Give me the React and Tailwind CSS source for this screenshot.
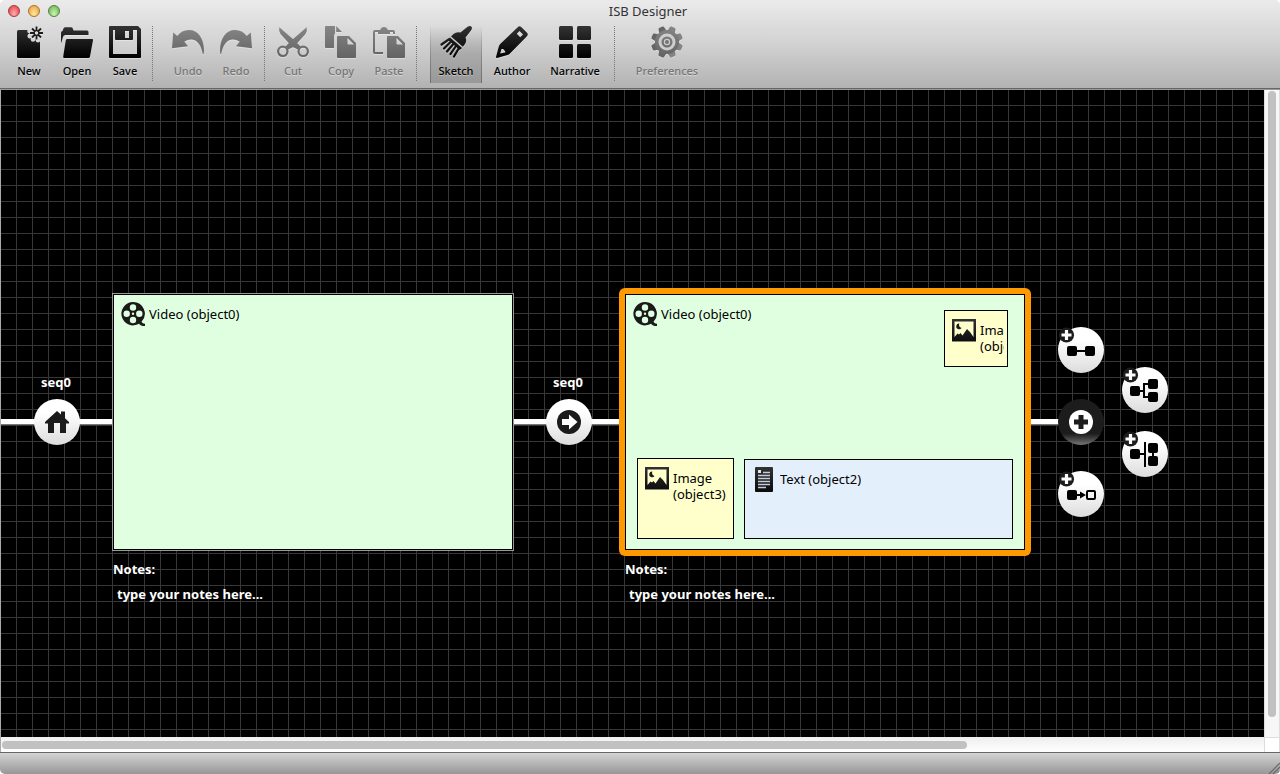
import React from "react";

/* Shared gradients used by every drawing in the window. */
function Gradients() {
  return (
    <svg className="absolute size-0" aria-hidden="true">
      <defs>
        <linearGradient id="ink" gradientUnits="userSpaceOnUse" x1="0" y1="0" x2="0" y2="32">
          <stop offset="0" stopColor="#333" />
          <stop offset="1" stopColor="#000" />
        </linearGradient>
        <linearGradient id="faded" gradientUnits="userSpaceOnUse" x1="0" y1="0" x2="0" y2="32">
          <stop offset="0" stopColor="#868686" />
          <stop offset="1" stopColor="#636363" />
        </linearGradient>
        <mask id="burst-cut">
          <rect width="32" height="32" fill="#fff" />
          <circle cx="23.5" cy="7" r="7" fill="#000" />
          <circle cx="16.5" cy="5" r="2.3" fill="#000" />
          <circle cx="17" cy="10" r="2.5" fill="#000" />
          <circle cx="20" cy="13.500" r="2.3" fill="#000" />
          <circle cx="25" cy="14.300" r="2.300" fill="#000" />
        </mask>
      </defs>
    </svg>
  );
}

const gearTeeth =
  "M13 1Q13.200 0 14.200 0H17.800Q18.800 0 19 1L20 6H12ZM13 31Q13.200 32 14.200 32H17.800Q18.800 32 19 31L20 26H12Z";

const toolIcons = {
  new: (
    <>
      <rect x="4" y="4" width="23" height="28" rx="1.5" mask="url(#burst-cut)" />
      <path
        d="M23.500 .500V5M23.500 9V13.500M17 7H21.500M25.500 7H30M19 2.500L22 5.500M25 8.500L28 11.500M28 2.500L25 5.500M22 8.500L19 11.500"
        stroke="#1c1c1c"
        strokeWidth="1.800"
      />
      <circle cx="23.5" cy="7" r="2.300" fill="none" stroke="#1c1c1c" strokeWidth="1.200" />
    </>
  ),
  open: (
    <>
      <path d="M0 17.5V6.5Q0 5 1.5 5L2.5 2.5Q3 1.2 4.5 1.2H10Q11.3 1.2 11.8 2.5L12.5 4.5H26Q27.5 4.5 27.5 6V9H4.5Q2.7 9 2.2 10.5Z" />
      <path d="M6.3 13H31Q32.3 13 32 14.3L29 30.5Q28.8 32 27.2 32H3.3Q2 32 2.2 30.5L4.8 14.3Q5 13 6.3 13Z" />
    </>
  ),
  save: (
    <path
      fillRule="evenodd"
      d="M1 0H29L32 3V31Q32 32 31 32H1Q0 32 0 31V1Q0 0 1 0ZM4 4V28H28V4H24V13Q24 14 23 14H7Q6 14 6 13V4ZM16 5V12H20V5Z"
    />
  ),
  undo: (
    <path d="M1.2 6.5L5.3 10C8 6 12 4 17 4C26 4 32 12 32 25L31.5 28L30.8 28C29.5 20 25.5 14 20 13.5C16.5 13.3 13.7 14.5 12.3 15.8L16 20.2L0 22.3Z" />
  ),
  redo: (
    <path d="M30.8 6.5L26.7 10C24 6 20 4 15 4C6 4 0 12 0 25L.5 28L1.2 28C2.5 20 6.5 14 12 13.5C15.500 13.3 18.3 14.5 19.7 15.8L16 20.2L32 22.3Z" />
  ),
  cut: (
    <>
      <path d="M2.300 1.200L17 14L23.500 20.500L21 23.500C17 22 15 20.500 13 18.500L3.500 8Q1.500 4.500 2.300 1.200Z" />
      <path d="M29.700 1.200L15 14L8.500 20.500L11 23.500C15 22 17 20.500 19 18.500L28.500 8Q30.500 4.500 29.700 1.200Z" />
      <g fill="none" stroke="url(#faded)" strokeWidth="2.200">
        <circle cx="5.800" cy="25.300" r="4.700" />
        <circle cx="26.200" cy="25.300" r="4.700" />
      </g>
    </>
  ),
  copy: (
    <>
      <path d="M1 0H10V7.500Q9 8.500 9 10V22H1Q0 22 0 21V1Q0 0 1 0ZM11.200 0L17 6H11.200Z" />
      <path fillRule="evenodd" d="M13 10H24L31 17V31Q31 32 30 32H13Q12 32 12 31V11Q12 10 13 10ZM22.500 12V17.500Q22.500 18.500 23.500 18.500H29Z" />
    </>
  ),
  paste: (
    <>
      <path d="M10 27H2Q1 27 1 26V6Q1 5 2 5H20Q21 5 21 6V8" fill="none" stroke="url(#faded)" strokeWidth="2" />
      <path d="M5 8V6Q5 4 7.500 3.500Q8 1 11 1Q14 1 14.500 3.500Q17 4 17 6V8Z" />
      <path fillRule="evenodd" d="M15 10H25L32 17V31Q32 32 31 32H15Q14 32 14 31V11Q14 10 15 10ZM23.500 12V17.500Q23.500 18.500 24.500 18.500H30Z" />
    </>
  ),
  sketch: (
    <>
      <path d="M28 .500Q30.500 -.800 31.700 1Q32.400 2.500 31 4.500L25.500 11.500Q27 14.500 25 18L22.800 20.800L11 10.500L13.500 8Q16.500 5.500 20.500 6.500L26 2Z" />
      <path d="M10 11.500L22 22L19.800 24L7.500 13.500Z" />
      <path
        d="M8.700 13.500L1.500 18.500M11 15.500L4 22.500M13.500 17.700L7 25.500M16 20L10.500 28M18.800 22.300L14 30.500"
        fill="none"
        stroke="url(#ink)"
        strokeWidth="2.200"
        strokeLinecap="round"
      />
    </>
  ),
  author: (
    <path
      fillRule="evenodd"
      d="M22 1Q23.500 -.500 25.200 1L31 6.800Q32.500 8.500 31 10.200L14 27.500Q13 28.500 11.500 29L1 32Q0 32.200 0 31L2.800 20.500Q3.200 19 4.200 18ZM23.500 5L20.800 7.800L24.200 11.200L27 8.400ZM5.500 23L4.200 27.600L9.300 26.500Q9.500 24.800 8 24Q7.600 22.500 5.500 23Z"
    />
  ),
  narrative: (
    <>
      <rect width="14" height="14" rx="1.500" />
      <rect x="18" width="14" height="14" rx="1.500" />
      <rect y="18" width="14" height="14" rx="1.500" />
      <rect x="18" y="18" width="14" height="14" rx="1.500" />
    </>
  ),
  preferences: (
    <>
      <path d={gearTeeth} transform="rotate(22.5 16 16)" />
      <path d={gearTeeth} transform="rotate(67.5 16 16)" />
      <path d={gearTeeth} transform="rotate(112.5 16 16)" />
      <path d={gearTeeth} transform="rotate(157.5 16 16)" />
      <circle cx="16" cy="16" r="12" />
      <circle cx="16" cy="16" r="8.500" fill="#cdcdcd" />
      <circle cx="16" cy="16" r="5.500" />
      <circle cx="16" cy="16" r="2.600" fill="none" stroke="#cdcdcd" strokeWidth="1.200" />
    </>
  ),
};

function Tool({ icon, label, width = "w-12", active = false, disabled = false }) {
  return (
    <button
      type="button"
      disabled={disabled}
      aria-pressed={active}
      className={`flex h-[57px] shrink-0 flex-col items-center ${width} ${
        active
          ? "bg-[linear-gradient(to_bottom,transparent,#707070),linear-gradient(to_bottom,transparent,#707070),linear-gradient(to_bottom,transparent,#aaaaaa_50%,#989898)] bg-size-[1px_100%,1px_100%,100%_100%] bg-position-[left_top,right_top,left_top] bg-no-repeat"
          : ""
      }`}
    >
      <svg
        viewBox="0 0 32 32"
        className="size-8 shrink-0 overflow-visible drop-shadow-[0_1px_0_rgba(255,255,255,0.35)]"
        fill={disabled ? "url(#faded)" : "url(#ink)"}
        aria-hidden="true"
      >
        {toolIcons[icon]}
      </svg>
      <span
        className={`mt-[5px] text-[11px] leading-4 font-medium whitespace-nowrap [text-shadow:0_1px_0_rgba(255,255,255,0.4)] ${
          disabled ? "text-[#757575]" : "text-black"
        }`}
      >
        {label}
      </span>
    </button>
  );
}

function Separator() {
  return <div className="h-[55px] w-px shrink-0 border-l border-dotted border-[#777]" />;
}

function TitleBar() {
  return (
    <header className="shrink-0 border-b border-[#666] bg-linear-to-b from-[#ebebeb] via-[#d2d2d2] to-[#b2b2b2]">
      <div className="relative flex h-[26px] items-start justify-center pt-[3px]">
        <div className="absolute top-[5px] left-2 flex gap-2">
          <button type="button" aria-label="Close" className="size-3 rounded-full border border-[#a33c3c] bg-radial-[at_50%_80%] from-[#ffb0b0] to-[#e0363c]" />
          <button type="button" aria-label="Minimize" className="size-3 rounded-full border border-[#a9702c] bg-radial-[at_50%_80%] from-[#ffe9a0] to-[#e99a34]" />
          <button type="button" aria-label="Zoom" className="size-3 rounded-full border border-[#4f8040] bg-radial-[at_50%_80%] from-[#cdf5b0] to-[#62ad4c]" />
        </div>
        <h1 className="pl-4 text-[13px] leading-4 text-[#333]">ISB Designer</h1>
      </div>
      <div className="flex h-[62px] items-start pl-[5px]" role="toolbar" aria-label="Main">
        <Tool icon="new" label="New" />
        <Tool icon="open" label="Open" />
        <Tool icon="save" label="Save" />
        <div className="flex pr-[11px] pl-[3px]"><Separator /></div>
        <Tool icon="undo" label="Undo" disabled />
        <Tool icon="redo" label="Redo" disabled />
        <div className="flex px-1"><Separator /></div>
        <Tool icon="cut" label="Cut" disabled />
        <Tool icon="copy" label="Copy" disabled />
        <Tool icon="paste" label="Paste" disabled />
        <div className="flex pr-[13px] pl-[3px]"><Separator /></div>
        <Tool icon="sketch" label="Sketch" width="w-[52px]" active />
        <Tool icon="author" label="Author" width="w-[60px]" />
        <Tool icon="narrative" label="Narrative" width="w-[66px]" />
        <div className="flex pr-5 pl-[6px]"><Separator /></div>
        <Tool icon="preferences" label="Preferences" width="w-[64px]" disabled />
      </div>
    </header>
  );
}

function FilmIcon() {
  return (
    <svg viewBox="0 0 24 24" className="size-6 shrink-0" aria-hidden="true">
      <path
        fill="#1a1a1a"
        fillRule="evenodd"
        d="M12 0A11.700 11.700 0 0 1 20.500 19.800Q21.500 21.800 24 21.700V24Q20 24.500 18 21.800A11.700 11.700 0 1 1 12 0ZM12 2.300A3.200 3.200 0 1 0 12 8.700A3.200 3.200 0 1 0 12 2.300ZM12 14.800A3.200 3.200 0 1 0 12 21.200A3.200 3.200 0 1 0 12 14.800ZM5.700 8.500A3.200 3.200 0 1 0 5.700 14.900A3.200 3.200 0 1 0 5.700 8.500ZM18.300 8.500A3.200 3.200 0 1 0 18.300 14.900A3.200 3.200 0 1 0 18.300 8.500ZM12 10.600A1.200 1.200 0 1 0 12 13A1.200 1.200 0 1 0 12 10.600Z"
      />
    </svg>
  );
}

function PictureIcon() {
  return (
    <svg viewBox="0 0 24 24" className="size-6 shrink-0" aria-hidden="true">
      <path fill="url(#ink)" fillRule="evenodd" d="M0 1H24V23H0ZM2.500 3.500V19L5.500 15.500L7 16.500L8.500 15L10.500 17.500L15 11L18 14L21.500 19V3.500Z" />
      <path fill="#1a1a1a" d="M7.300 5.500A2.900 2.900 0 1 0 9.500 10A3.600 3.600 0 0 1 7.300 5.500Z" />
      <path fill="#8a8a70" d="M0 23H24V24H0Z" />
    </svg>
  );
}

function DocumentIcon() {
  return (
    <svg viewBox="0 0 18 25" className="h-[25px] w-[18px] shrink-0" aria-hidden="true">
      <rect width="18" height="25" rx="1" fill="url(#ink)" />
      <path d="M8 5.500h7M3 8.500h12M3 11.500h12M3 14.500h12M3 17.500h12M3 20.500h8" stroke="#c3cedd" strokeWidth="1.300" />
      <path d="M3 3h3v3H3z" fill="#dde6f2" />
    </svg>
  );
}

function Scene({ id, className, frame, children }) {
  return (
    <section className={`absolute isolate top-[204px] w-[400px] text-[13px] leading-4 ${className}`}>
      <div className={`relative h-64 border border-black bg-[#e0ffe0] ${frame}`}>
        <div className="flex gap-1 pt-[7px] pl-[7px]">
          <FilmIcon />
          <span className="pt-1">Video (object0)</span>
        </div>
        {children}
      </div>
      <label htmlFor={id} className="mt-[11px] block font-bold text-white">Notes:</label>
      <input
        id={id}
        defaultValue="type your notes here..."
        className="mt-[9px] block w-full bg-transparent px-1 font-bold text-white outline-none"
      />
    </section>
  );
}

function MediaObject({ className, icon, children }) {
  return (
    <div className={`absolute flex items-start overflow-hidden border border-black ${className}`}>
      {icon}
      <span className="min-w-0 overflow-hidden pt-1">{children}</span>
    </div>
  );
}

function Round({ label, className, badge = false, dark = false, children }) {
  return (
    <button
      type="button"
      aria-label={label}
      className={`absolute size-[46px] rounded-full ${
        dark
          ? "bg-linear-to-b from-[#1c1c1c] from-75% to-[#777]"
          : "bg-linear-to-b from-white from-30% to-[#dcdcdc]"
      } ${className}`}
    >
      <svg viewBox="0 0 46 46" className="size-full overflow-visible" aria-hidden="true">
        {children}
        {badge && (
          <>
            <circle cx="8.500" cy="8" r="7.600" fill="#1c1c1c" />
            <path d="M8.500 3v10M3.500 8h10" stroke="#fff" strokeWidth="3.200" />
          </>
        )}
      </svg>
    </button>
  );
}

function Wire({ className }) {
  return <div className={`absolute top-[329px] h-[6px] border-b border-[#777] bg-white ${className}`} />;
}

function Canvas() {
  return (
    <main className="relative min-w-0 flex-1 overflow-hidden border-l border-[#aaa] bg-black bg-[linear-gradient(to_right,transparent_15px,#373737_15px),linear-gradient(to_bottom,transparent_15px,#373737_15px)] bg-size-[16px_16px]">
      <Wire className="left-0 w-28" />
      <Wire className="left-[512px] w-[106px]" />
      <Wire className="left-[1030px] w-10" />

      <span className="absolute top-[284px] left-8 w-[46px] text-center text-[13px] leading-4 font-bold text-white">seq0</span>
      <Round label="Sequence start" className="top-[309px] left-[33px]">
        <path fill="#1b1b1b" d="M23 12L27 15.600V12.500H31V19.200L35 23V24.500H32V34H26V24H20V34H14V24.500H11V23Z" />
      </Round>

      <Scene id="notes-first" className="left-28" frame="outline outline-[#999]" />

      <span className="absolute top-[284px] left-[544px] w-[46px] text-center text-[13px] leading-4 font-bold text-white">seq0</span>
      <Round label="Next scene" className="top-[309px] left-[545px]">
        <circle cx="23" cy="23" r="12" fill="#1b1b1b" />
        <path fill="#fff" d="M16 20H23V15.500L31.500 23L23 30.500V26H16Z" />
      </Round>

      <Scene
        id="notes-second"
        className="left-[624px]"
        frame="before:absolute before:-inset-[7px] before:-z-10 before:rounded-[6px] before:bg-[#ff9900]"
      >
        <MediaObject
          className="top-[15px] left-[318px] h-[57px] w-16 gap-1 bg-[#ffffcc] pt-[7px] pr-[3px] pl-[7px]"
          icon={<PictureIcon />}
        >
          Image (object1)
        </MediaObject>
        <MediaObject
          className="top-[163px] left-[11px] h-[81px] w-[97px] gap-1 bg-[#ffffcc] pt-[7px] pl-[7px]"
          icon={<PictureIcon />}
        >
          Image (object3)
        </MediaObject>
        <MediaObject
          className="top-[164px] left-[118px] h-[80px] w-[269px] gap-[7px] bg-[#e4effc] pt-[7px] pl-[10px]"
          icon={<DocumentIcon />}
        >
          Text (object2)
        </MediaObject>
      </Scene>

      <Round label="Add" dark className="top-[309px] left-[1057px]">
        <circle cx="23" cy="23" r="12" fill="#fff" />
        <path d="M23 16v14M16 23h14" stroke="#1c1c1c" strokeWidth="5" />
      </Round>
      <Round label="Add linked scene" badge className="top-[237px] left-[1057px]">
        <path d="M18 24h10" stroke="#000" strokeWidth="2" />
        <rect x="9" y="19" width="10" height="10" rx="2" />
        <rect x="27" y="19" width="10" height="10" rx="2" />
      </Round>
      <Round label="Add branch" badge className="top-[277px] left-[1121px]">
        <path d="M17 24h5M28 17h-6v13h6" fill="none" stroke="#000" strokeWidth="2" />
        <rect x="8" y="19" width="10" height="10" rx="2" />
        <rect x="26" y="12" width="10" height="10" rx="2" />
        <rect x="26" y="25" width="10" height="10" rx="2" />
      </Round>
      <Round label="Add parallel scenes" badge className="top-[341px] left-[1121px]">
        <path d="M17 23h6M23 11v25M31 20v8" stroke="#000" strokeWidth="2" />
        <rect x="8" y="18" width="10" height="10" rx="2" />
        <rect x="26" y="12" width="10" height="10" rx="2" />
        <rect x="26" y="25" width="10" height="10" rx="2" />
      </Round>
      <Round label="Add jump" badge className="top-[381px] left-[1057px]">
        <path d="M18 24h6" stroke="#000" strokeWidth="2" />
        <path d="M22 20.500L28 24L22 27.500Z" />
        <rect x="9" y="19" width="10" height="10" rx="2" />
        <rect x="29" y="20" width="8" height="8" rx="1" fill="none" stroke="#000" strokeWidth="2" />
      </Round>
    </main>
  );
}

export default function App() {
  return (
    <div className="h-screen min-h-[640px] bg-white font-['Noto_Sans','Lucida_Grande',sans-serif]">
      <Gradients />
      <div className="flex h-full flex-col overflow-hidden rounded-[5px]">
        <TitleBar />
        <div className="flex min-h-0 flex-1 border-t border-[#999]">
          <Canvas />
          <div className="flex w-4 shrink-0 border-x border-[#ddd] bg-[#f7f7f7] px-[3px] pt-px pb-5">
            <div className="w-full rounded-full bg-[#c1c1c1]" />
          </div>
        </div>
        <div className="flex h-[15px] shrink-0 border-l border-[#aaa]">
          <div className="min-w-0 flex-1 bg-linear-to-b from-[#eee] to-white py-1 pl-px">
            <div className="h-2 w-[76.500%] rounded-full bg-[#c1c1c1]" />
          </div>
          <div className="w-4 shrink-0 border border-b-0 border-[#ddd] bg-white" />
        </div>
        <footer className="flex h-[22px] shrink-0 items-end justify-end border-t border-[#666] bg-linear-to-b from-[#d4d4d4] to-[#979797]">
          <svg viewBox="0 0 12 12" className="size-3" aria-hidden="true">
            <path d="M1 12L12 1M5 12L12 5M9 12L12 9" stroke="#666" strokeWidth="1.200" />
          </svg>
        </footer>
      </div>
    </div>
  );
}
